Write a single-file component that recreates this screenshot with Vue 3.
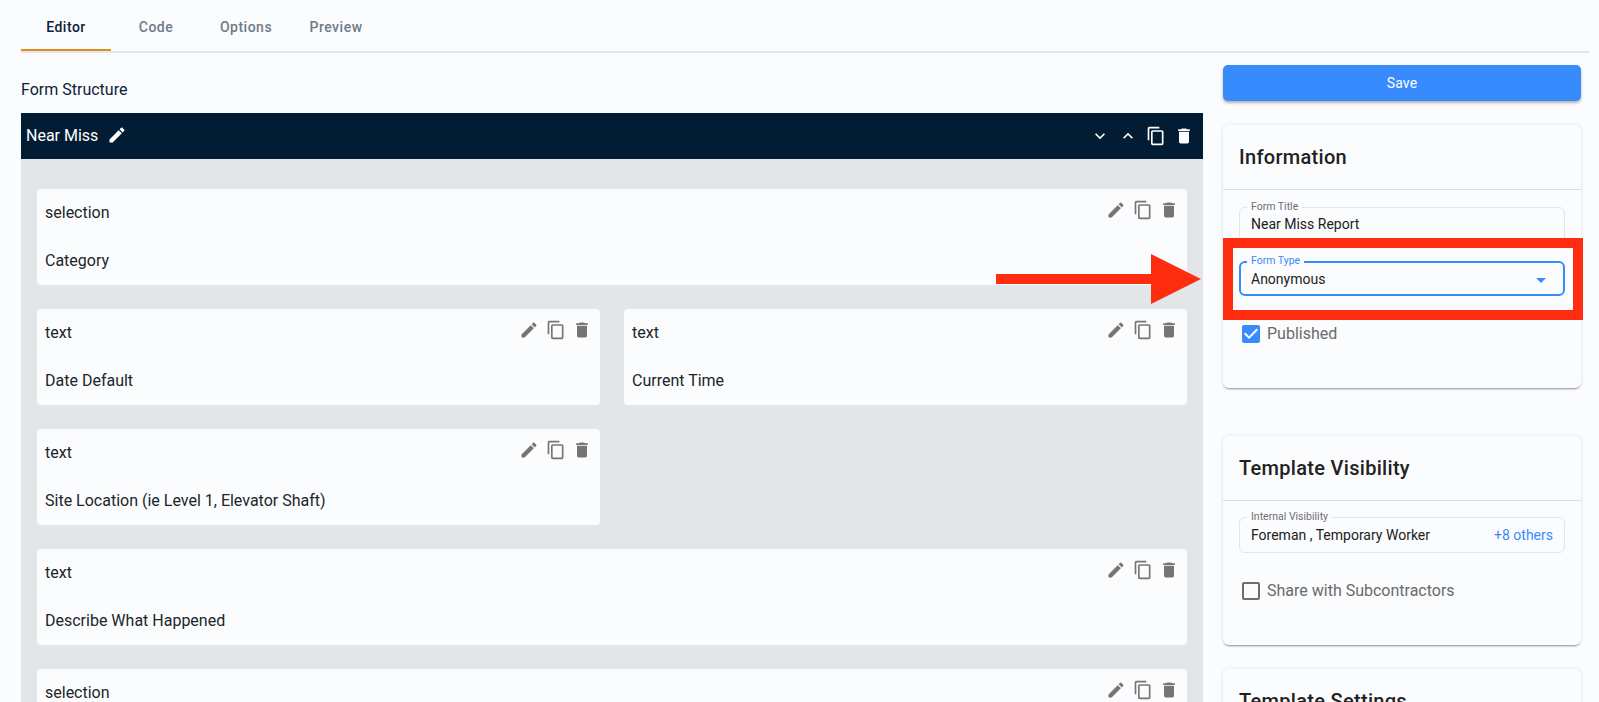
<script setup>
const tabs = ['Editor', 'Code', 'Options', 'Preview']
const rows = [
  { id: 1, type: 'selection', label: 'Category', full: true },
  { id: 2, type: 'text', label: 'Date Default' },
  { id: 3, type: 'text', label: 'Current Time' },
  { id: 4, type: 'text', label: 'Site Location (ie Level 1, Elevator Shaft)' },
  { id: 5, type: 'text', label: 'Describe What Happened', full: true },
  { id: 6, type: 'selection', label: '', full: true }
]
const icons = {
  pencil: 'M20.71,7.04C21.1,6.65 21.1,6 20.71,5.63L18.37,3.29C18,2.9 17.35,2.9 16.96,3.29L15.12,5.12L18.87,8.87M3,17.25V21H6.75L17.81,9.93L14.06,6.18L3,17.25Z',
  copy: 'M19,21H8V7H19M19,5H8A2,2 0 0,0 6,7V21A2,2 0 0,0 8,23H19A2,2 0 0,0 21,21V7A2,2 0 0,0 19,5M16,1H4A2,2 0 0,0 2,3V17H4V3H16V1Z',
  trash: 'M19,4H15.5L14.5,3H9.5L8.5,4H5V6H19M6,19A2,2 0 0,0 8,21H16A2,2 0 0,0 18,19V7H6V19Z',
  down: 'M7.41,8.58L12,13.17L16.59,8.58L18,10L12,16L6,10L7.41,8.58Z',
  up: 'M7.41,15.41L12,10.83L16.59,15.41L18,14L12,8L6,14L7.41,15.41Z',
  menu: 'M7,10L12,15L17,10H7Z',
  checked: 'M10,17L5,12L6.41,10.58L10,14.17L17.59,6.58L19,8M19,3H5C3.89,3 3,3.89 3,5V19A2,2 0 0,0 5,21H19A2,2 0 0,0 21,19V5C21,3.89 20.1,3 19,3Z',
  blank: 'M19,3H5C3.89,3 3,3.89 3,5V19A2,2 0 0,0 5,21H19A2,2 0 0,0 21,19V5C21,3.89 20.1,3 19,3M19,5V19H5V5H19Z'
}
</script>

<template>
  <div class="page">
    <nav class="tabs">
      <div v-for="(t, i) in tabs" :key="t" class="tab" :class="{ active: i === 0 }">{{ t }}</div>
    </nav>

    <div class="main">
      <section class="left">
        <h2 class="structure">Form Structure</h2>
        <div class="section-bar">
          <span class="section-name">Near Miss</span>
          <svg class="icon bar-pencil" viewBox="0 0 24 24"><path :d="icons.pencil" /></svg>
          <div class="bar-actions">
            <svg class="icon" viewBox="0 0 24 24"><path :d="icons.down" /></svg>
            <svg class="icon" viewBox="0 0 24 24"><path :d="icons.up" /></svg>
            <svg class="icon" viewBox="0 0 24 24"><path :d="icons.copy" /></svg>
            <svg class="icon" viewBox="0 0 24 24"><path :d="icons.trash" /></svg>
          </div>
        </div>
        <div class="section-body">
          <article
            v-for="r in rows"
            :key="r.id"
            class="field-card"
            :class="{ full: r.full }"
          >
            <div class="field-top">
              <span>{{ r.type }}</span>
              <div class="field-actions">
                <svg class="icon" viewBox="0 0 24 24"><path :d="icons.pencil" /></svg>
                <svg class="icon" viewBox="0 0 24 24"><path :d="icons.copy" /></svg>
                <svg class="icon" viewBox="0 0 24 24"><path :d="icons.trash" /></svg>
              </div>
            </div>
            <div class="field-label">{{ r.label }}</div>
          </article>
        </div>
      </section>

      <aside class="right">
        <button class="save">Save</button>

        <section class="card info">
          <h3 class="card-title">Information</h3>
          <div class="card-body">
            <div class="input title-input">
              <span class="legend">Form Title</span>
              <span>Near Miss Report</span>
            </div>
            <div class="input focused">
              <span class="legend">Form Type</span>
              <span>Anonymous</span>
              <svg class="caret" viewBox="0 0 24 24"><path :d="icons.menu" /></svg>
            </div>
            <label class="check">
              <svg class="box on" viewBox="3 3 18 18"><path :d="icons.checked" /></svg>
              <span class="check-text">Published</span>
            </label>
          </div>
        </section>

        <section class="card visibility">
          <h3 class="card-title">Template Visibility</h3>
          <div class="card-body">
            <div class="input">
              <span class="legend">Internal Visibility</span>
              <span>Foreman , Temporary Worker</span>
              <span class="others">+8 others</span>
            </div>
            <label class="check">
              <svg class="box" viewBox="3 3 18 18"><path :d="icons.blank" /></svg>
              <span class="check-text">Share with Subcontractors</span>
            </label>
          </div>
        </section>

        <section class="card settings">
          <h3 class="card-title">Template Settings</h3>
        </section>
      </aside>
    </div>

    <div class="highlight"></div>
    <svg class="arrow" viewBox="0 0 205 50">
      <path d="M0,20H155V0L205,25L155,50V30H0Z" />
    </svg>
  </div>
</template>

<style scoped>
.page {
  position: relative;
  width: 1599px;
  height: 702px;
  overflow: hidden;
  background: #fbfcfe;
  color: #212529;
  font-family: Roboto, "Liberation Sans", sans-serif;
  font-size: 16px;
}
.tabs {
  display: flex;
  width: 1568px;
  height: 51px;
  margin-left: 21px;
  border-bottom: 2px solid #e4e6ea;
  box-sizing: content-box;
}
.tab {
  width: 90px;
  height: 51px;
  line-height: 54px;
  text-align: center;
  font-size: 14px;
  font-weight: 500;
  letter-spacing: 0.5px;
  color: #6f7b87;
  box-sizing: border-box;
}
.tab.active {
  color: #0b2238;
  border-bottom: 2px solid #dc8f1e;
  height: 51px;
}
.main {
  display: flex;
  gap: 20px;
  margin-left: 21px;
}
.left {
  width: 1182px;
  flex: none;
}
.structure {
  margin: 0;
  padding-top: 27px;
  height: 60px;
  box-sizing: border-box;
  font-size: 16px;
  font-weight: 400;
  line-height: 20px;
  color: #0b2238;
}
.section-bar {
  display: flex;
  align-items: center;
  height: 46px;
  padding: 0 9px 0 5px;
  background: #021d33;
  color: #fff;
}
.section-name {
  font-size: 16px;
  margin-bottom: 2px;
}
.icon {
  width: 20px;
  height: 20px;
  fill: currentColor;
  flex: none;
}
.bar-pencil {
  margin-left: 9px;
  margin-bottom: 2px;
}
.bar-actions {
  display: flex;
  gap: 8px;
  margin-left: auto;
}
.section-body {
  display: grid;
  grid-template-columns: 1fr 1fr;
  gap: 24px;
  padding: 30px 16px 0;
  background: #e3e6e9;
  height: 600px;
  align-content: start;
}
.field-card {
  height: 96px;
  padding: 0 8px;
  border-radius: 4px;
  background: #fbfcfe;
}
.field-card.full {
  grid-column: 1 / span 2;
}
.field-top {
  display: flex;
  justify-content: space-between;
  height: 48px;
  line-height: 48px;
}
.field-actions {
  display: flex;
  gap: 6.5px;
  padding-top: 11px;
  color: #757575;
  height: 20px;
}
.field-label {
  height: 48px;
  line-height: 48px;
}
.right {
  width: 358px;
  flex: none;
  padding-top: 12px;
}
.save {
  display: block;
  width: 100%;
  height: 36px;
  border: 0;
  border-radius: 5px;
  background: #388bfd;
  color: #fff;
  font-family: inherit;
  font-size: 14px;
  letter-spacing: 0.2px;
  box-shadow: 0 2px 3px rgba(0, 0, 0, 0.3);
}
.card {
  border-radius: 6px;
  background: #fbfcfe;
  box-shadow: 0 2px 2px -1px rgba(0, 0, 0, 0.4), 0 0 4px rgba(0, 0, 0, 0.1);
}
.info {
  margin-top: 24px;
}
.visibility {
  margin-top: 48px;
}
.settings {
  margin-top: 24px;
  height: 120px;
}
.card-title {
  margin: 0;
  height: 65px;
  padding: 0 16px;
  line-height: 64px;
  font-size: 20px;
  font-weight: 500;
  letter-spacing: 0.3px;
  color: #212121;
  border-bottom: 1px solid #dcdee2;
  box-sizing: border-box;
}
.settings .card-title {
  border: 0;
}
.card-body {
  display: flex;
  flex-direction: column;
  gap: 19px;
  padding: 17px 16px 45px;
}
.visibility .card-body {
  padding-top: 16px;
}
.input {
  position: relative;
  display: flex;
  align-items: center;
  justify-content: space-between;
  height: 35px;
  padding: 0 11px;
  border: 1px solid #e2e4e8;
  border-radius: 6px;
  font-size: 14px;
  box-sizing: border-box;
  color: #212121;
}
.title-input {
  padding-bottom: 2px;
}
.visibility .input {
  height: 36px;
}
.legend {
  position: absolute;
  left: 7px;
  top: -7px;
  padding: 0 4px;
  background: #fbfcfe;
  font-size: 10.5px;
  line-height: 12px;
  color: #6e6e6e;
}
.input.focused {
  border: 2px solid #388bfd;
  padding: 1px 11px 0 10px;
}
.input.focused .legend {
  left: 6px;
  top: -8px;
  color: #388bfd;
}
.caret {
  width: 24px;
  height: 24px;
  margin-right: -1px;
  margin-top: 1px;
  fill: #388bfd;
}
.others {
  color: #388bfd;
}
.check {
  display: flex;
  align-items: center;
  gap: 7px;
  height: 18px;
  margin-top: 10px;
  padding-left: 3px;
  color: #6a6a6a;
  font-size: 16px;
}
.check-text {
  margin-bottom: 2px;
}
.box {
  width: 18px;
  height: 18px;
  fill: #6e6e6e;
  flex: none;
}
.box.on {
  fill: #388bfd;
}
.highlight {
  position: absolute;
  left: 1223px;
  top: 238px;
  width: 360px;
  height: 82px;
  border: 10px solid #ff2d10;
  box-sizing: border-box;
}
.arrow {
  position: absolute;
  left: 996px;
  top: 254px;
  width: 205px;
  height: 50px;
  fill: #ff2d10;
}
</style>

<style>
html, body {
  margin: 0;
  overflow: hidden;
}
</style>
